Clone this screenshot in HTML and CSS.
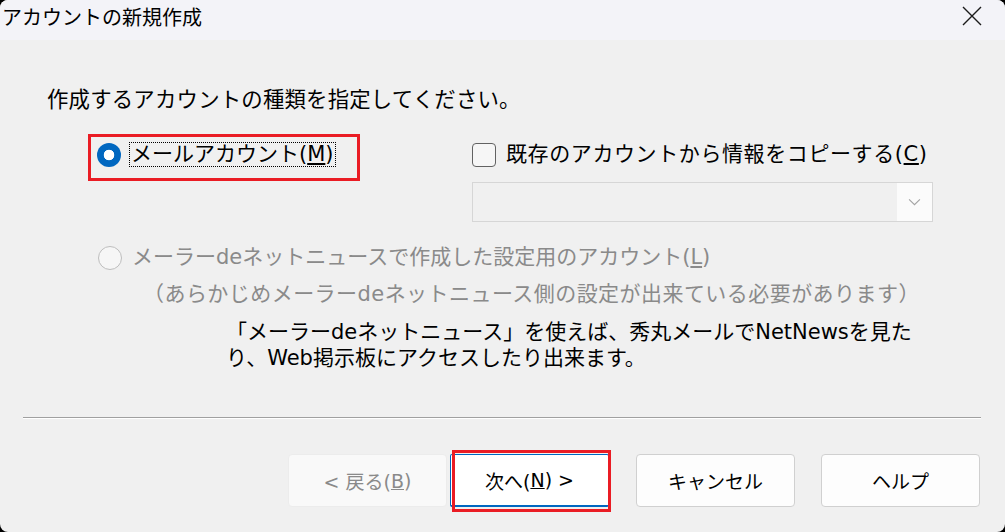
FILE: index.html
```html
<!DOCTYPE html>
<html lang="ja">
<head>
<meta charset="utf-8">
<title>アカウントの新規作成</title>
<link rel="stylesheet" href="styles.css">
</head>
<body>
<div class="window">
  <div class="titlebar">
    <div class="title">アカウントの新規作成</div>
    <svg class="close" viewBox="0 0 20 20" aria-label="閉じる"><path d="M1 1L19 19M19 1L1 19" stroke="#1b1b1b" stroke-width="1.4" fill="none"/></svg>
  </div>
  <div class="content">
    <p class="heading">作成するアカウントの種類を指定してください。</p>
    <div class="types">
      <div class="mark-box">
        <div class="option">
          <span class="radio checked"></span>
          <span class="label focused">メールアカウント(<u>M</u>)</span>
        </div>
      </div>
      <div class="copy">
        <div class="option">
          <span class="checkbox"></span>
          <span class="label wide">既存のアカウントから情報をコピーする(<u>C</u>)</span>
        </div>
        <div class="combo">
          <span class="combo-btn"><svg class="chevron" viewBox="0 0 12 7"><path d="M1 1l5 5 5-5" fill="none" stroke="#a3a3a3" stroke-width="1"/></svg></span>
        </div>
      </div>
    </div>
    <div class="option disabled news">
      <span class="radio"></span>
      <span class="label">メーラーdeネットニュースで作成した設定用のアカウント(<u>L</u>)</span>
    </div>
    <p class="note">（あらかじめメーラーdeネットニュース側の設定が出来ている必要があります）</p>
    <p class="desc">「メーラーdeネットニュース」を使えば、秀丸メールでNetNewsを見た<br>り、Web掲示板にアクセスしたり出来ます。</p>
    <hr class="sep">
    <div class="buttons">
      <div class="pair">
        <div class="btn disabled">&lt; 戻る(<u>B</u>)</div>
        <div class="btn default">次へ(<u>N</u>) &gt;</div>
      </div>
      <div class="btn">キャンセル</div>
      <div class="btn">ヘルプ</div>
    </div>
  </div>
</div>
</body>
</html>
```

FILE: styles.css
```css
html, body {
  margin: 0;
  height: 100%;
}
body {
  background: #000;
  font-family: "DejaVu Sans", "Noto Sans CJK JP", sans-serif;
  font-size: 21px;
  color: #000;
}
.window {
  width: 1005px;
  height: 532px;
  background: #f0f0f0;
  border-radius: 8px;
  overflow: hidden;
}
.titlebar {
  height: 40px;
  background: #f3f3f8;
  display: flex;
  justify-content: space-between;
  align-items: flex-start;
}
.title {
  font-family: "Noto Sans CJK JP", sans-serif;
  font-size: 20px;
  line-height: 26px;
  padding: 4px 0 0 2px;
}
.close {
  width: 20px;
  height: 20px;
  margin: 6px 23px 0 0;
}
p {
  margin: 0;
}
.heading {
  margin: 47px 0 0 47px;
  font-size: 21.4px;
  line-height: 26px;
  letter-spacing: 0.2px;
}
.types {
  display: grid;
  grid-template-columns: 384px 461px;
  align-items: start;
  margin: 21px 0 0 88px;
}
.mark-box {
  justify-self: start;
  border: 3px solid #ea1c24;
  padding: 5px 21px 11px 6px;
}
.option {
  display: flex;
  align-items: center;
  gap: 8px;
}
.radio {
  flex: none;
  width: 24px;
  height: 24px;
  box-sizing: border-box;
  border-radius: 50%;
  border: 1px solid #bdbdbd;
  background: #f6f6f6;
}
.radio.checked {
  border: 0;
  background: radial-gradient(circle, #fff 0 5px, #0067c0 5.6px);
}
.label {
  line-height: 23px;
  border: 1px solid transparent;
  padding: 0 1px;
  white-space: nowrap;
}
.label.focused {
  border: 1px dotted #000;
}
.label.wide {
  letter-spacing: 0.6px;
}
.copy {
  padding-top: 8px;
}
.checkbox {
  flex: none;
  width: 24px;
  height: 24px;
  box-sizing: border-box;
  border: 1px solid #626262;
  border-radius: 4px;
  background: #f6f6f6;
}
.combo {
  margin-top: 15px;
  height: 40px;
  box-sizing: border-box;
  border: 1px solid #d6d6d6;
  background: #f0f0f0;
  display: flex;
  justify-content: flex-end;
}
.combo-btn {
  width: 35px;
  background: #fbfbfb;
  display: flex;
  align-items: center;
  justify-content: center;
}
.chevron {
  width: 13px;
  height: 8px;
}
.disabled {
  color: #8a8a8a;
}
.news {
  margin: 23px 0 0 98px;
}
.note {
  margin: 11px 0 0 143px;
  line-height: 26px;
  color: #8a8a8a;
  letter-spacing: 0.45px;
}
.desc {
  margin: 12px 0 0 226px;
  line-height: 26px;
}
.sep {
  margin: 46px 24px 0 23px;
  height: 0;
  border: 0;
  border-top: 1px solid #a0a0a0;
  border-bottom: 1px solid #fff;
}
.buttons {
  display: flex;
  justify-content: flex-end;
  gap: 26px;
  margin-top: 35px;
  padding-right: 25px;
}
.pair {
  display: flex;
  gap: 3px;
  margin-right: 1px;
}
.btn {
  position: relative;
  width: 159px;
  height: 53px;
  box-sizing: border-box;
  border: 1px solid #d0d0d0;
  border-radius: 4px;
  background: #fdfdfd;
  font-size: 19px;
  display: flex;
  align-items: center;
  justify-content: center;
  white-space: nowrap;
}
.btn.disabled {
  background: #f9f9f9;
  border-color: #ececec;
}
.btn.default {
  background: #fff;
  border: 1px solid #0067c0;
  border-bottom-width: 2px;
  border-radius: 2px;
}
.btn.default::after {
  content: "";
  position: absolute;
  left: 1px;
  top: -5px;
  right: -3px;
  bottom: -7px;
  border: 3px solid #ea1c24;
}
```
